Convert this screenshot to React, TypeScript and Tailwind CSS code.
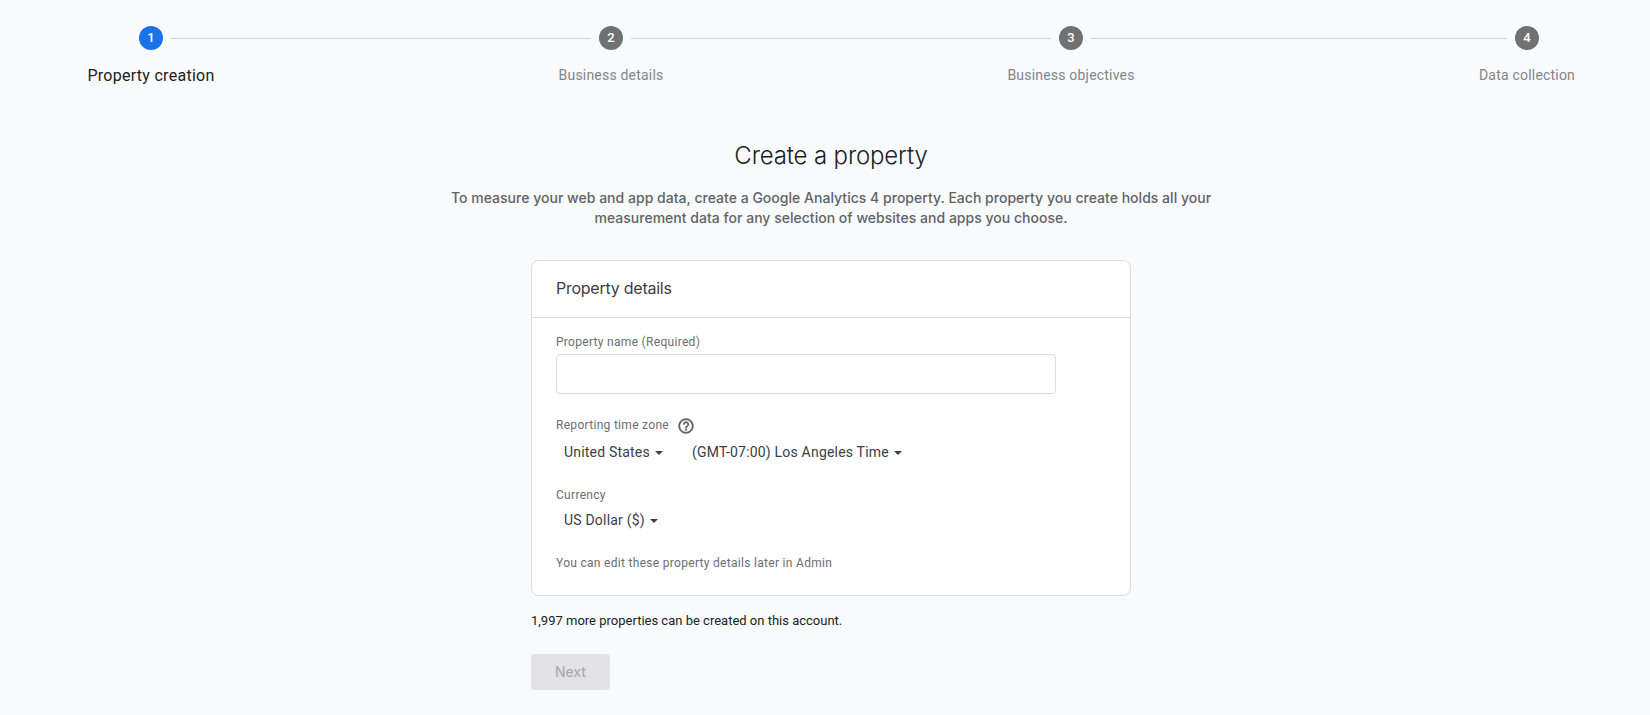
import React, { useState } from 'react';

interface Step {
  label: string;
  lineClass: string;
}

const steps: Step[] = [
  { label: 'Property creation', lineClass: 'w-[420px]' },
  { label: 'Business details', lineClass: 'w-[420px]' },
  { label: 'Business objectives', lineClass: 'flex-1' },
  { label: 'Data collection', lineClass: '' },
];

const HelpIcon: React.FC<{ className?: string }> = ({ className }) => (
  <svg viewBox="0 0 24 24" fill="currentColor" stroke="currentColor" strokeWidth="0.5" className={className} aria-hidden="true">
    <path d="M11 18h2v-2h-2v2zm1-16C6.48 2 2 6.48 2 12s4.480 10 10 10 10-4.480 10-10S17.520 2 12 2zm0 18c-4.410 0-8-3.590-8-8s3.590-8 8-8 8 3.590 8 8-3.590 8-8 8zm0-14c-2.210 0-4 1.790-4 4h2c0-1.100.9-2 2-2s2 .9 2 2c0 2-3 1.750-3 5h2c0-2.250 3-2.500 3-5 0-2.210-1.790-4-4-4z" />
  </svg>
);

const Dropdown: React.FC<{ value: string; className?: string }> = ({ value, className = '' }) => (
  <button type="button" className={`flex items-center gap-[5px] h-5 text-sm leading-5 text-[#3c4043] ${className}`}>
    <span>{value}</span>
    <svg viewBox="0 0 8 4" className="w-2 h-1 mt-0.5" fill="currentColor" aria-hidden="true">
      <path d="M0 0h8L4 4z" />
    </svg>
  </button>
);

const Stepper: React.FC<{ current: number }> = ({ current }) => (
  <div className="flex items-start h-[75px] pl-[139px] pr-[111px] pt-[26px]">
    {steps.map((step, i) => {
      const active = i === current;
      return (
        <React.Fragment key={step.label}>
          <div className="flex flex-col items-center w-6 shrink-0">
            <div
              className={`flex items-center justify-center w-6 h-6 rounded-full text-white text-[13px] font-medium ${
                active ? 'bg-[#1a73e8]' : 'bg-[#707173]'
              }`}
            >
              {i + 1}
            </div>
            <span
              className={`h-5 leading-5 whitespace-nowrap ${
                active
                  ? 'mt-4 text-base tracking-[0.28px] text-[#202124]'
                  : 'mt-[15px] text-sm tracking-[0.2px] text-[#80868b]'
              }`}
            >
              {step.label}
            </span>
          </div>
          {i < steps.length - 1 && <div className={`h-px mt-3 mx-2 bg-[#d5d7da] ${step.lineClass}`} />}
        </React.Fragment>
      );
    })}
  </div>
);

export default function App() {
  const [name, setName] = useState('');

  return (
    <div className="h-[715px] overflow-hidden bg-[#f9fafc] font-['Roboto',sans-serif] text-[#202124]">
      <Stepper current={0} />

      <main className="flex flex-col items-center w-[1662px]">
        <h1 className="mt-[65px] text-2xl leading-8 font-['Inter',sans-serif] font-light tracking-[-0.15px]">
          Create a property
        </h1>
        <p className="mt-4 w-[780px] text-center text-sm leading-5 tracking-[0.02px] font-medium text-[#5f6368] font-['Inter',sans-serif]">
          To measure your web and app data, create a Google Analytics 4 property. Each property you create holds all your
          <br />
          measurement data for any selection of websites and apps you choose.
        </p>

        <div className="w-[600px] mt-8">
          <section className="h-[336px] bg-white border border-[#dadce0] rounded-lg">
            <h2 className="h-14 px-6 leading-[55px] text-base tracking-[-0.25px] text-[#3c4043] font-['Inter',sans-serif]">
              Property details
            </h2>
            <div className="flex flex-col border-t border-[#dadce0] px-6 pt-4 text-xs leading-4 tracking-[0.3px] text-[#6a6e73]">
              <label htmlFor="property-name">Property name (Required)</label>
              <input
                id="property-name"
                value={name}
                onChange={(e) => setName(e.target.value)}
                className="mt-1 w-[500px] h-10 px-3 text-sm border border-[#dadce0] rounded"
              />
              <div className="flex mt-[23px] h-4">
                <span>Reporting time zone</span>
                <HelpIcon className="w-[18px] h-[18px] ml-[7.5px] text-[#5f6368]" />
              </div>
              <div className="flex mt-[9px] pl-2">
                <Dropdown value="United States" className="tracking-[0.2px] w-32" />
                <Dropdown value="(GMT-07:00) Los Angeles Time" className="tracking-[0.2px]" />
              </div>
              <span className="mt-[25px]">Currency</span>
              <Dropdown value="US Dollar ($)" className="mt-[7px] ml-2 self-start tracking-[0.2px]" />
              <p className="mt-[25px]">You can edit these property details later in Admin</p>
            </div>
          </section>

          <p className="mt-4 text-[13px] leading-[18px]">1,997 more properties can be created on this account.</p>
          <button
            type="button"
            disabled
            className="mt-6 w-[79px] h-9 rounded bg-[#e3e3e5] text-sm font-medium tracking-[-0.1px] text-[#abacae] font-['Inter',sans-serif]"
          >
            Next
          </button>
        </div>
      </main>
    </div>
  );
}
